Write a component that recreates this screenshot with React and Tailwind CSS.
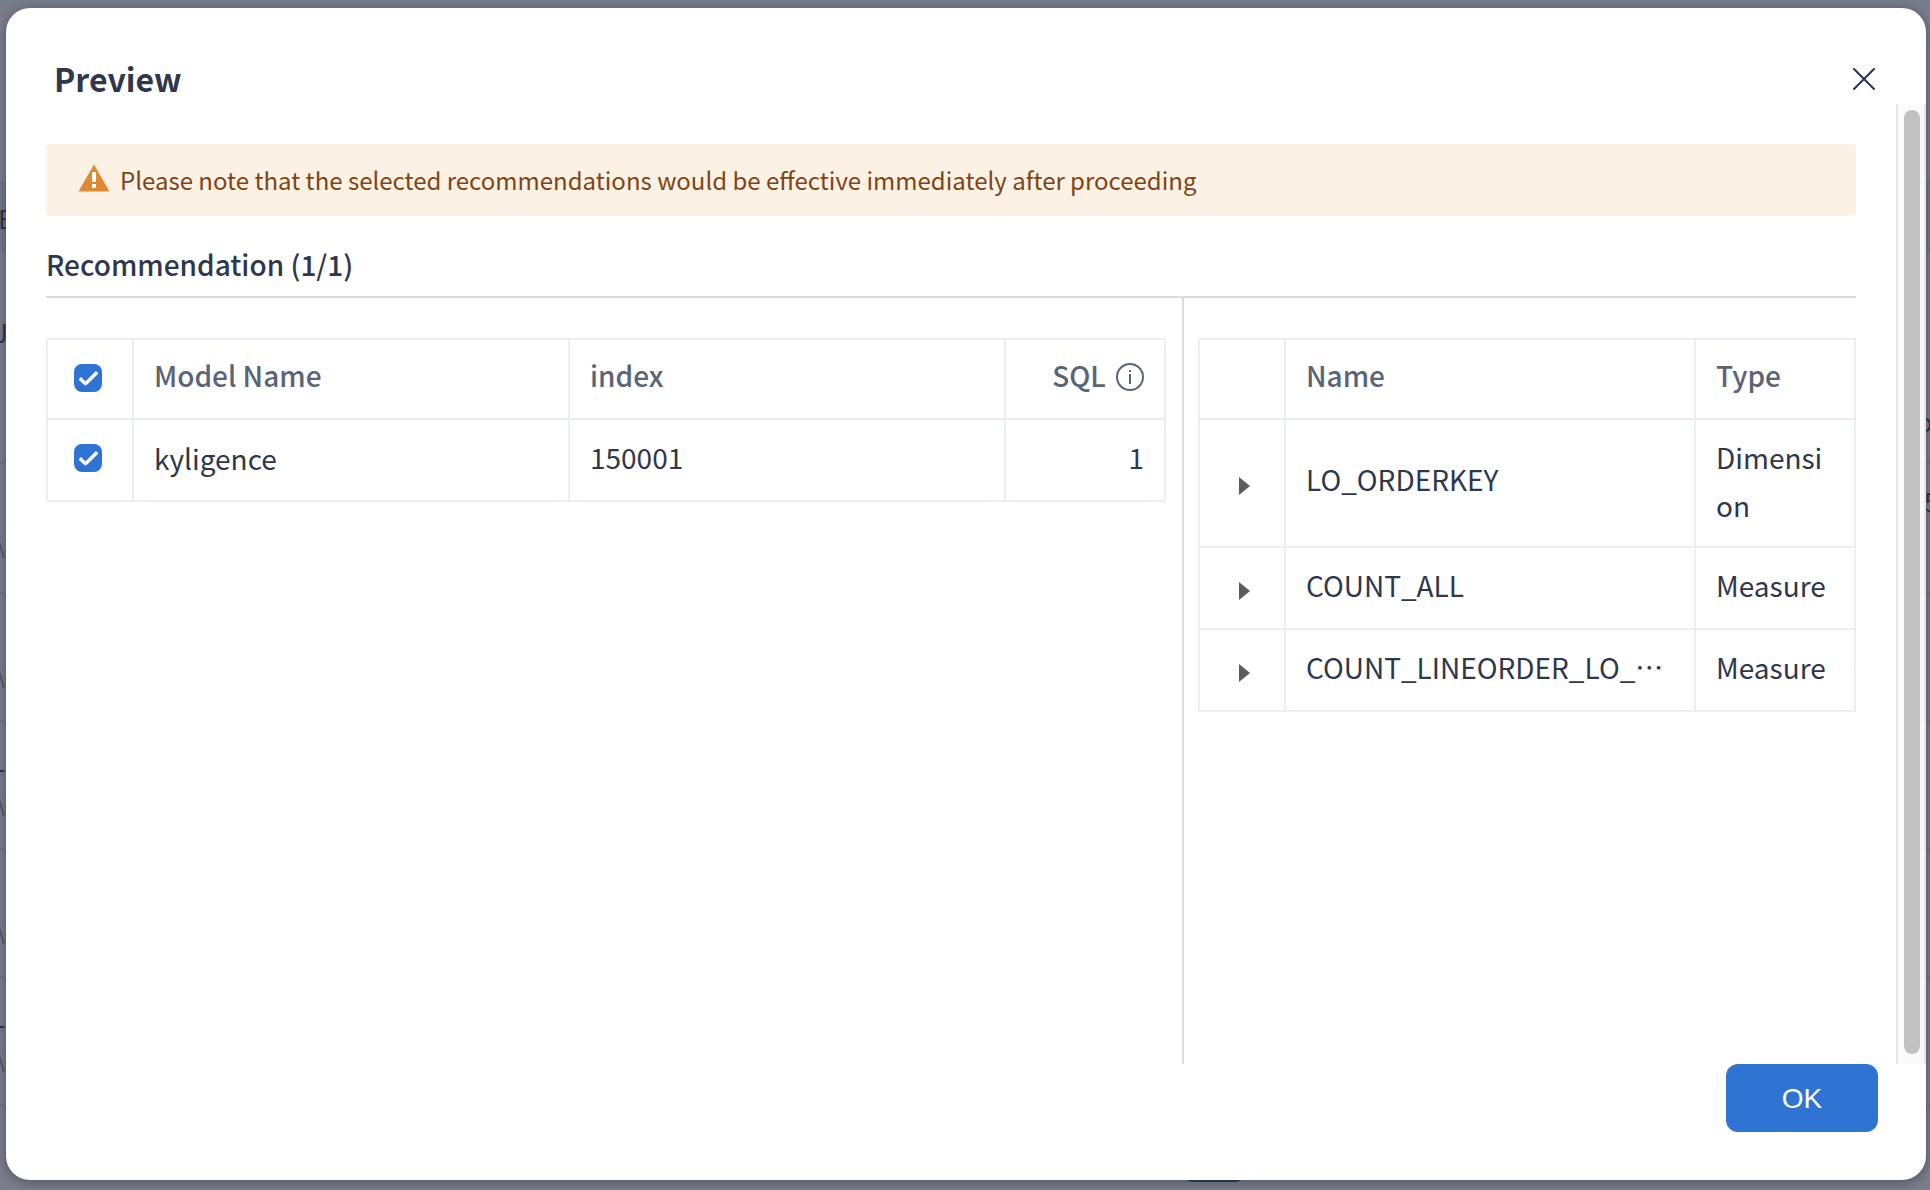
const font = 'font-["Noto_Sans_CJK_SC",sans-serif]';

const Check = () => (
  <span className="flex size-7 items-center justify-center rounded-lg bg-[#2f74d3]">
    <svg width="28" height="28" viewBox="0 0 28 28" fill="none" stroke="#fff" strokeWidth="3.4">
      <path d="M5.8 14.2L10.6 19Q11.5 19.8 12.4 19L23.2 8.2" />
    </svg>
  </span>
);

const Caret = () => (
  <svg width="11" height="18" viewBox="0 0 11 18" className="mt-[5px] ml-1">
    <path d="M0 0L11 9L0 18Z" fill="#5c5c5c" />
  </svg>
);

const glyphs = [
  { t: "E", c: "-left-[2px] top-[202px] text-[#2b3350]" },
  { t: "J", c: "-left-[6px] top-[316px] text-[#2b3350]" },
  { t: "\\", c: "-left-[5px] top-[526px] text-[#4c566c]" },
  { t: "\\", c: "-left-[5px] top-[656px] text-[#4c566c]" },
  { t: "\\", c: "-left-[5px] top-[784px] text-[#4c566c]" },
  { t: "\\", c: "-left-[5px] top-[912px] text-[#4c566c]" },
  { t: "\\", c: "-left-[5px] top-[1040px] text-[#4c566c]" },
  { t: "o", c: "left-[1917px] top-[405px] text-[#2b3350]" },
  { t: "5", c: "left-[1924px] top-[485px] text-[#2b3350]" },
];

const lines = ["top-[462px]", "top-[592px]", "top-[720px]", "top-[848px]", "top-[976px]", "top-[1104px]"];

const rows = [
  { name: "LO_ORDERKEY", type: "Dimension", h: "h-[128px]", p: "pb-[9px]", tp: "pb-[5px]" },
  { name: "COUNT_ALL", type: "Measure", h: "h-[82px]", p: "pb-[7px]", tp: "pb-[7px]" },
  { name: "COUNT_LINEORDER_LO_", more: true, type: "Measure", h: "h-[82px]", p: "pb-[7px]", tp: "pb-[7px]" },
];

export default function App() {
  return (
    <div className={`relative h-[1190px] w-[1930px] overflow-hidden bg-[#7b7e8a] pt-2 pl-1.5 text-[28px] leading-[48px] text-[#2f374c] ${font}`}>
      <div className="absolute inset-x-0 top-0 h-2.5 bg-[#777d8a]" />
      <div className="absolute inset-x-0 top-[182px] h-[70px] bg-[#727886]" />
      {lines.map((l) => (
        <div key={l} className={`absolute inset-x-0 h-0.5 bg-[#737785] ${l}`} />
      ))}
      {glyphs.map((g, i) => (
        <span key={i} className={`absolute text-[26px] leading-8 ${g.c}`}>{g.t}</span>
      ))}
      <div className="absolute left-0 top-[770px] h-0.5 w-1 bg-[#2b3350]" />
      <div className="absolute left-0 top-[1026px] h-0.5 w-1 bg-[#2b3350]" />
      <div className="absolute left-[1186px] top-[1160px] h-[22px] w-14 rounded-md bg-[#233f66]" />

      <section className="relative flex h-[1172px] w-[1920px] flex-col rounded-[24px] bg-white shadow-[0_2px_12px_rgba(30,35,55,0.5)]">
        <header className="flex h-24 shrink-0 items-start justify-between pt-[46px] pr-[51px] pl-12">
          <h1 className="text-[32px] leading-[48px] font-bold">Preview</h1>
          <svg width="22" height="22" viewBox="0 0 22 22" stroke="#2b3350" strokeWidth="2" strokeLinecap="round" className="mt-3.5">
            <path d="M1 1L21 21M21 1L1 21" />
          </svg>
        </header>

        <div className="flex h-[960px] shrink-0">
          <main className="flex w-[1890px] flex-col pt-10 pr-10 pl-10">
            <div className="flex h-[72px] w-[1810px] shrink-0 items-center rounded bg-[#fcf1e5] pl-8 text-[#7f4413]">
              <svg width="32" height="28" viewBox="0 0 32 28" className="mb-1">
                <path d="M16 .5L31.5 27.5H.5Z" fill="#df8a33" />
                <path d="M14 8h4v10h-4zM14 20h4v4h-4z" fill="#fff" />
              </svg>
              <p className="ml-2.5 text-[24px] leading-9">Please note that the selected recommendations would be effective immediately after proceeding</p>
            </div>
            <h2 className="h-[82px] w-[1810px] shrink-0 border-b-2 border-[#dcdcdc] pt-6 text-[28px] leading-[48px] font-medium">Recommendation (1/1)</h2>

            <div className="flex min-h-0 flex-1">
              <div className="w-[1138px] shrink-0 border-r-2 border-[#dcdcdc] pt-10">
                <table className="w-[1120px] table-fixed border-collapse border-2 border-[#ebeef7]">
                  <colgroup><col className="w-[86px]" /><col className="w-[436px]" /><col className="w-[436px]" /><col className="w-[160px]" /></colgroup>
                  <tbody>
                    <tr className="h-20 border-b-2 border-[#e7ebf5] text-left text-[#596477]">
                      <th className="border-r-2 border-[#ebeef7] p-0 pb-0.5 pl-[26px]"><Check /></th>
                      <th className="border-r-2 border-[#ebeef7] p-0 pb-[9px] pl-5 font-medium">Model Name</th>
                      <th className="border-r-2 border-[#ebeef7] p-0 pb-[9px] pl-5 font-medium">index</th>
                      <th className="p-0 pr-5 pb-[9px] font-medium">
                        <div className="flex items-center justify-end gap-2.5">
                          SQL
                          <svg width="28" height="28" viewBox="0 0 28 28" fill="none" stroke="#596477" strokeWidth="2" className="mt-1">
                            <circle cx="14" cy="14" r="13" />
                            <path d="M14 11V21M14 7V9" />
                          </svg>
                        </div>
                      </th>
                    </tr>
                    <tr className="h-[82px]">
                      <td className="border-r-2 border-[#ebeef7] p-0 pb-1 pl-[26px]"><Check /></td>
                      <td className="border-r-2 border-[#ebeef7] p-0 pb-[5px] pl-5">kyligence</td>
                      <td className="border-r-2 border-[#ebeef7] p-0 pb-[7px] pl-5">150001</td>
                      <td className="p-0 pr-5 pb-[7px] text-right">1</td>
                    </tr>
                  </tbody>
                </table>
              </div>

              <div className="pt-10 pl-3.5">
                <table className="w-[658px] table-fixed border-collapse border-2 border-[#ebeef7]">
                  <colgroup><col className="w-[86px]" /><col className="w-[410px]" /><col className="w-[160px]" /></colgroup>
                  <tbody>
                    <tr className="h-20 border-b-2 border-[#e7ebf5] text-left text-[#596477]">
                      <th className="border-r-2 border-[#ebeef7] p-0" />
                      <th className="border-r-2 border-[#ebeef7] p-0 pb-[9px] pl-5 font-medium">Name</th>
                      <th className="p-0 pb-[9px] pl-5 font-medium">Type</th>
                    </tr>
                    {rows.map((r) => (
                      <tr key={r.name} className={`border-b-2 border-[#ebeef7] ${r.h}`}>
                        <td className="border-r-2 border-[#ebeef7] p-0 pl-[35px]"><Caret /></td>
                        <td className={`border-r-2 border-[#ebeef7] p-0 pl-5 whitespace-nowrap ${r.p}`}>{r.name}{r.more && <span lang="zh-CN">…</span>}</td>
                        <td className={`p-0 px-5 break-all ${r.tp}`}>{r.type}</td>
                      </tr>
                    ))}
                  </tbody>
                </table>
              </div>
            </div>
          </main>
          <div className="w-[30px] border-x-2 border-[#e8e8e8] bg-[#fafafa] pt-1.5 pl-1.5">
            <div className="h-[944px] w-4 rounded-full bg-[#c1c1c1]" />
          </div>
        </div>

        <footer className="flex justify-end pr-12">
          <button className="h-[68px] w-[152px] rounded-xl bg-[#2f74d3] pt-0.5 font-['Liberation_Sans',Arial,sans-serif] text-[28px] text-white">OK</button>
        </footer>
      </section>
    </div>
  );
}
